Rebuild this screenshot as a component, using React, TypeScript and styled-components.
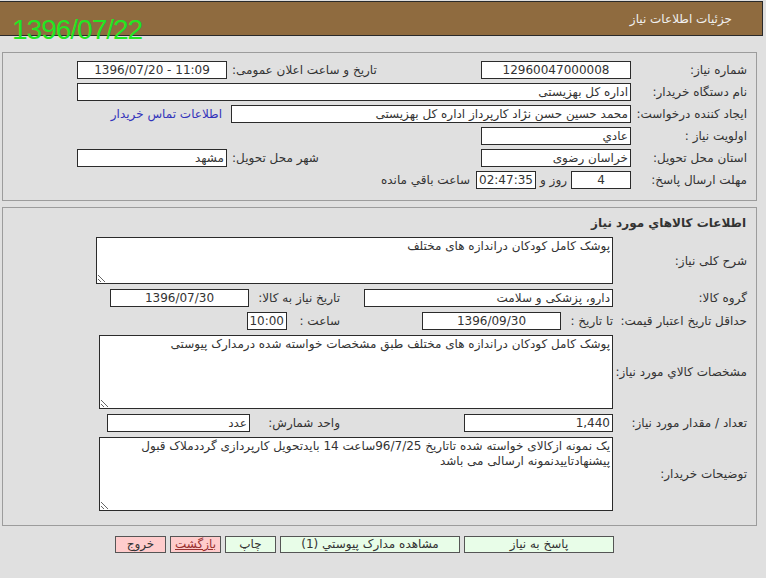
import React from 'react';
import styled, { createGlobalStyle } from 'styled-components';

const Global = createGlobalStyle`
  html, body { margin: 0; padding: 0; background: #e0e0e0; }
  body { font-family: "DejaVu Sans", sans-serif; font-size: 12px; color: #333; }
  * { box-sizing: border-box; }
`;

const Page = styled.div`
  position: relative;
  width: 766px;
  height: 578px;
  overflow: hidden;
  direction: rtl;
  background: #e0e0e0;
`;

const Header = styled.div`
  margin: 1px 3px 0 0;
  height: 35px;
  background: #8f6b3f;
  border: 1px solid #2a2a2a;
  border-left: none;
  display: flex;
  align-items: center;
  padding-right: 30px;
  color: #f0f0f0;
  font-size: 12px;
`;

const Stamp = styled.div`
  position: absolute;
  left: 12px;
  top: 14px;
  direction: ltr;
  font-family: "Liberation Sans", sans-serif;
  font-size: 28px;
  letter-spacing: -1px;
  color: #22e622;
`;

const Panel = styled.section<{ $mt: number; $pt: number; $pb: number }>`
  margin: ${(p) => p.$mt}px 9px 0 2px;
  padding: ${(p) => p.$pt}px 0 ${(p) => p.$pb}px 0;
  border: 1px solid #9c9c9c;
  display: flex;
  flex-direction: column;
`;

const Rows = styled.div<{ $gap: number }>`
  display: flex;
  flex-direction: column;
  gap: ${(p) => p.$gap}px;
`;

const Row = styled.div`
  display: flex;
  align-items: center;
  min-height: 18px;
`;

const Label = styled.div<{ $w: number; $pr: number }>`
  flex: none;
  width: ${(p) => p.$w}px;
  padding-right: ${(p) => p.$pr}px;
  text-align: right;
  white-space: nowrap;
  color: #333;
`;

const SubLabel = styled.div<{ $w: number; $pr?: number; $pl?: number; $end?: boolean }>`
  flex: none;
  width: ${(p) => p.$w}px;
  padding-right: ${(p) => p.$pr ?? 0}px;
  padding-left: ${(p) => p.$pl ?? 0}px;
  text-align: ${(p) => (p.$end ? 'left' : 'right')};
  white-space: nowrap;
  color: #333;
`;

const Field = styled.input<{ $w: number; $center?: boolean }>`
  flex: none;
  width: ${(p) => p.$w}px;
  height: 18px;
  margin: 0;
  padding: 0 2px;
  border: 1px solid #2b2b2b;
  background: #fff;
  font: inherit;
  color: #333;
  text-align: ${(p) => (p.$center ? 'center' : 'right')};
  outline: none;
`;

const Area = styled.textarea<{ $w: number; $h: number }>`
  flex: none;
  width: ${(p) => p.$w}px;
  height: ${(p) => p.$h}px;
  margin: 0;
  padding: 1px 2px;
  border: 1px solid #2b2b2b;
  background: #fff;
  font: inherit;
  line-height: 15px;
  color: #333;
  overflow: hidden;
  outline: none;
  direction: rtl;
`;

const Link = styled.a`
  padding-right: 9px;
  color: #3333bb;
  text-decoration: none;
  white-space: nowrap;
`;

const Text = styled.span<{ $mx?: number }>`
  flex: none;
  margin: 0 ${(p) => p.$mx ?? 0}px;
  white-space: nowrap;
`;

const Title = styled.div`
  height: 29px;
  display: flex;
  align-items: center;
  padding-right: 10px;
  font-weight: bold;
  font-size: 12px;
  color: #333;
`;

const Buttons = styled.div`
  display: flex;
  gap: 4px;
  margin: 10px 152px 0 0;
`;

const Btn = styled.button<{ $w: number; $tone: 'green' | 'pink'; $u?: boolean }>`
  flex: none;
  width: ${(p) => p.$w}px;
  height: 17px;
  margin: 0;
  padding: 0;
  border: 1px solid #555;
  background: ${(p) => (p.$tone === 'green' ? '#e8fde8' : '#ffcccc')};
  font: inherit;
  color: ${(p) => (p.$u ? '#9a3030' : '#333')};
  text-decoration: ${(p) => (p.$u ? 'underline' : 'none')};
  line-height: 15px;
`;

const App: React.FC = () => (
  <Page>
    <Global />
    <Header>جزئیات اطلاعات نیاز</Header>
    <Stamp>1396/07/22</Stamp>

    <Panel $mt={16} $pt={8} $pb={11}>
      <Rows $gap={4}>
        <Row>
          <Label $w={125} $pr={9}>شماره نیاز:</Label>
          <Field $w={150} $center readOnly defaultValue="12960047000008" />
          <SubLabel $w={254} $pl={5} $end>تاریخ و ساعت اعلان عمومی:</SubLabel>
          <Field $w={150} $center dir="ltr" readOnly defaultValue="1396/07/20 - 11:09" />
        </Row>
        <Row>
          <Label $w={125} $pr={9}>نام دستگاه خریدار:</Label>
          <Field $w={554} readOnly defaultValue="اداره کل بهزیستی" />
        </Row>
        <Row>
          <Label $w={125} $pr={9}>ایجاد کننده درخواست:</Label>
          <Field $w={400} readOnly defaultValue="محمد حسین حسن نژاد کارپرداز اداره کل بهزیستی" />
          <Link href="#">اطلاعات تماس خریدار</Link>
        </Row>
        <Row>
          <Label $w={125} $pr={9}>اولویت نیاز :</Label>
          <Field $w={150} readOnly defaultValue="عادي" />
        </Row>
        <Row>
          <Label $w={125} $pr={9}>استان محل تحویل:</Label>
          <Field $w={150} readOnly defaultValue="خراسان رضوی" />
          <SubLabel $w={254} $pl={5} $end>شهر محل تحویل:</SubLabel>
          <Field $w={150} readOnly defaultValue="مشهد" />
        </Row>
        <Row>
          <Label $w={125} $pr={9}>مهلت ارسال پاسخ:</Label>
          <Field $w={60} $center readOnly defaultValue="4" />
          <Text $mx={4}>روز و</Text>
          <Field $w={60} $center readOnly defaultValue="02:47:35" />
          <Text $mx={6}>ساعت باقي مانده</Text>
        </Row>
      </Rows>
    </Panel>

    <Panel $mt={6} $pt={0} $pb={14}>
      <Title>اطلاعات کالاهاي مورد نياز</Title>
      <Rows $gap={5}>
        <Row>
          <Label $w={143} $pr={9}>شرح کلی نیاز:</Label>
          <Area $w={517} $h={47} readOnly defaultValue="پوشک کامل کودکان دراندازه های مختلف" />
        </Row>
        <Row>
          <Label $w={143} $pr={9}>گروه کالا:</Label>
          <Field $w={249} readOnly defaultValue="دارو، پزشکی و سلامت" />
          <SubLabel $w={115} $pr={24}>تاریخ نیاز به کالا:</SubLabel>
          <Field $w={139} $center readOnly defaultValue="1396/07/30" />
        </Row>
        <Row>
          <Label $w={143} $pr={9}>حداقل تاریخ اعتبار قیمت:</Label>
          <SubLabel $w={52}>تا تاریخ :</SubLabel>
          <Field $w={139} $center readOnly defaultValue="1396/09/30" />
          <SubLabel $w={135} $pr={82}>ساعت :</SubLabel>
          <Field $w={40} $center readOnly defaultValue="10:00" />
        </Row>
        <Row>
          <Label $w={143} $pr={9}>مشخصات کالاي مورد نياز:</Label>
          <Area
            $w={514}
            $h={74}
            readOnly
            defaultValue="پوشک کامل کودکان دراندازه های مختلف طبق مشخصات خواسته شده درمدارک پیوستی"
          />
        </Row>
        <Row>
          <Label $w={143} $pr={9}>تعداد / مقدار مورد نیاز:</Label>
          <Field $w={149} readOnly defaultValue="1,440" />
          <SubLabel $w={214} $pr={124}>واحد شمارش:</SubLabel>
          <Field $w={143} readOnly defaultValue="عدد" />
        </Row>
        <Row>
          <Label $w={143} $pr={9}>توضیحات خریدار:</Label>
          <Area
            $w={514}
            $h={74}
            readOnly
            defaultValue={'یک نمونه ازکالای خواسته شده تاتاریخ 96/7/25ساعت 14 بایدتحویل کارپردازی گرددملاک قبول\nپیشنهادتاییدنمونه ارسالی می باشد'}
          />
        </Row>
      </Rows>
    </Panel>

    <Buttons>
      <Btn $w={150} $tone="green">پاسخ به نیاز</Btn>
      <Btn $w={180} $tone="green">مشاهده مدارک پیوستي (1)</Btn>
      <Btn $w={51} $tone="green">چاپ</Btn>
      <Btn $w={51} $tone="pink" $u>بازگشت</Btn>
      <Btn $w={51} $tone="pink">خروج</Btn>
    </Buttons>
  </Page>
);

export default App;
